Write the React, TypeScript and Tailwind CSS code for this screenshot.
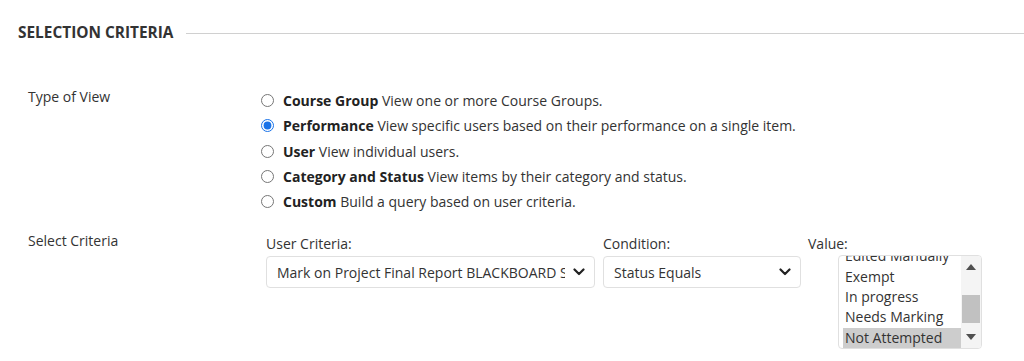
import React from 'react'

// Selection criteria panel — radio list of view types plus criteria pickers.

const views = [
  { name: 'Course Group', desc: 'View one or more Course Groups.' },
  { name: 'Performance', desc: 'View specific users based on their performance on a single item.' },
  { name: 'User', desc: 'View individual users.' },
  { name: 'Category and Status', desc: 'View items by their category and status.' },
  { name: 'Custom', desc: 'Build a query based on user criteria.' },
]

const values = ['Edited Manually', 'Exempt', 'In progress', 'Needs Marking', 'Not Attempted']

function Chevron() {
  return (
    <svg width="12" height="8" viewBox="0 0 12 8" aria-hidden>
      <path d="M1.5 1.5 L6 6 L10.5 1.5" fill="none" stroke="#222" strokeWidth="2.2" strokeLinecap="round" strokeLinejoin="round" />
    </svg>
  )
}

function FakeSelect({ value, width }: { value: string; width: string }) {
  return (
    <div className={`${width} h-[32px] flex items-center justify-between border border-[#e0e0e0] rounded-[4px] bg-white pl-[10px] pr-[9px]`}>
      <span className="whitespace-nowrap overflow-hidden text-[#333] flex-1 mr-[8px]">{value}</span>
      <Chevron />
    </div>
  )
}

export default function App() {
  return (
    <div className="w-[1024px] h-[361px] bg-white overflow-hidden text-[14px] text-[#333]" style={{ fontFamily: '"Open Sans", sans-serif' }}>
      <div className="pl-[18px] pt-[23px]">
        <div className="flex items-center">
          <h2 className="font-bold text-[15.4px] leading-[20px] text-[#333]">SELECTION CRITERIA</h2>
          <div className="flex-1 h-px bg-[#d0d0d0] ml-[13px]" />
        </div>

        <div className="flex mt-[44px]">
          <div className="w-[238px] pl-[10px] leading-[20px]">Type of View</div>
          <div className="flex flex-col pt-[1px]">
            {views.map((v, i) => (
              <label key={v.name} className="flex items-center h-[25.3px] whitespace-nowrap">
                <input type="radio" name="view" defaultChecked={i === 1} className="m-0 ml-[5px] mr-[9px] w-[13px] h-[13px] accent-[#1a73e8]" />
                <span>
                  <b className="font-bold text-[#222]">{v.name}</b> {v.desc}
                </span>
              </label>
            ))}
          </div>
        </div>

        <div className="flex mt-[17px]">
          <div className="w-[248px] pl-[10px] leading-[20px]">Select Criteria</div>
          <div className="flex gap-[8px]">
            <div className="flex flex-col">
              <div className="leading-[20px] mt-[3px] mb-[2px]">User Criteria:</div>
              <FakeSelect value="Mark on Project Final Report BLACKBOARD SUBMISSION" width="w-[329px]" />
            </div>
            <div className="flex flex-col">
              <div className="leading-[20px] mt-[3px] mb-[2px]">Condition:</div>
              <FakeSelect value="Status Equals" width="w-[198px]" />
            </div>
            <div className="flex flex-col -ml-[1px]">
              <div className="leading-[20px] mt-[3px]">Value:</div>
              <div className="ml-[30px] mt-[1px] w-[144px] h-[94px] border border-[#e0e0e0] rounded-[4px] flex overflow-hidden bg-white">
                <div className="flex-1 pl-[4px] overflow-hidden">
                  <div className="-mt-[10px]">
                    {values.map((v, i) => (
                      <div key={v} className={`h-[20.3px] leading-[20.3px] pl-[2px] whitespace-nowrap ${i === values.length - 1 ? 'bg-[#cdcdcd]' : ''}`}>
                        {v}
                      </div>
                    ))}
                  </div>
                </div>
                <div className="w-[20px] bg-[#f4f4f4] flex flex-col items-center">
                  <div className="h-[22px] flex items-center justify-center">
                    <svg width="10" height="6" viewBox="0 0 10 6"><path d="M5 0 L10 6 L0 6 Z" fill="#505050" /></svg>
                  </div>
                  <div className="flex-1 w-full flex flex-col">
                    <div className="h-[17px]" />
                    <div className="h-[28px] mx-[1px] bg-[#c1c1c1]" />
                  </div>
                  <div className="h-[22px] flex items-center justify-center">
                    <svg width="10" height="6" viewBox="0 0 10 6"><path d="M0 0 L10 0 L5 6 Z" fill="#505050" /></svg>
                  </div>
                </div>
              </div>
            </div>
          </div>
        </div>
      </div>
    </div>
  )
}
